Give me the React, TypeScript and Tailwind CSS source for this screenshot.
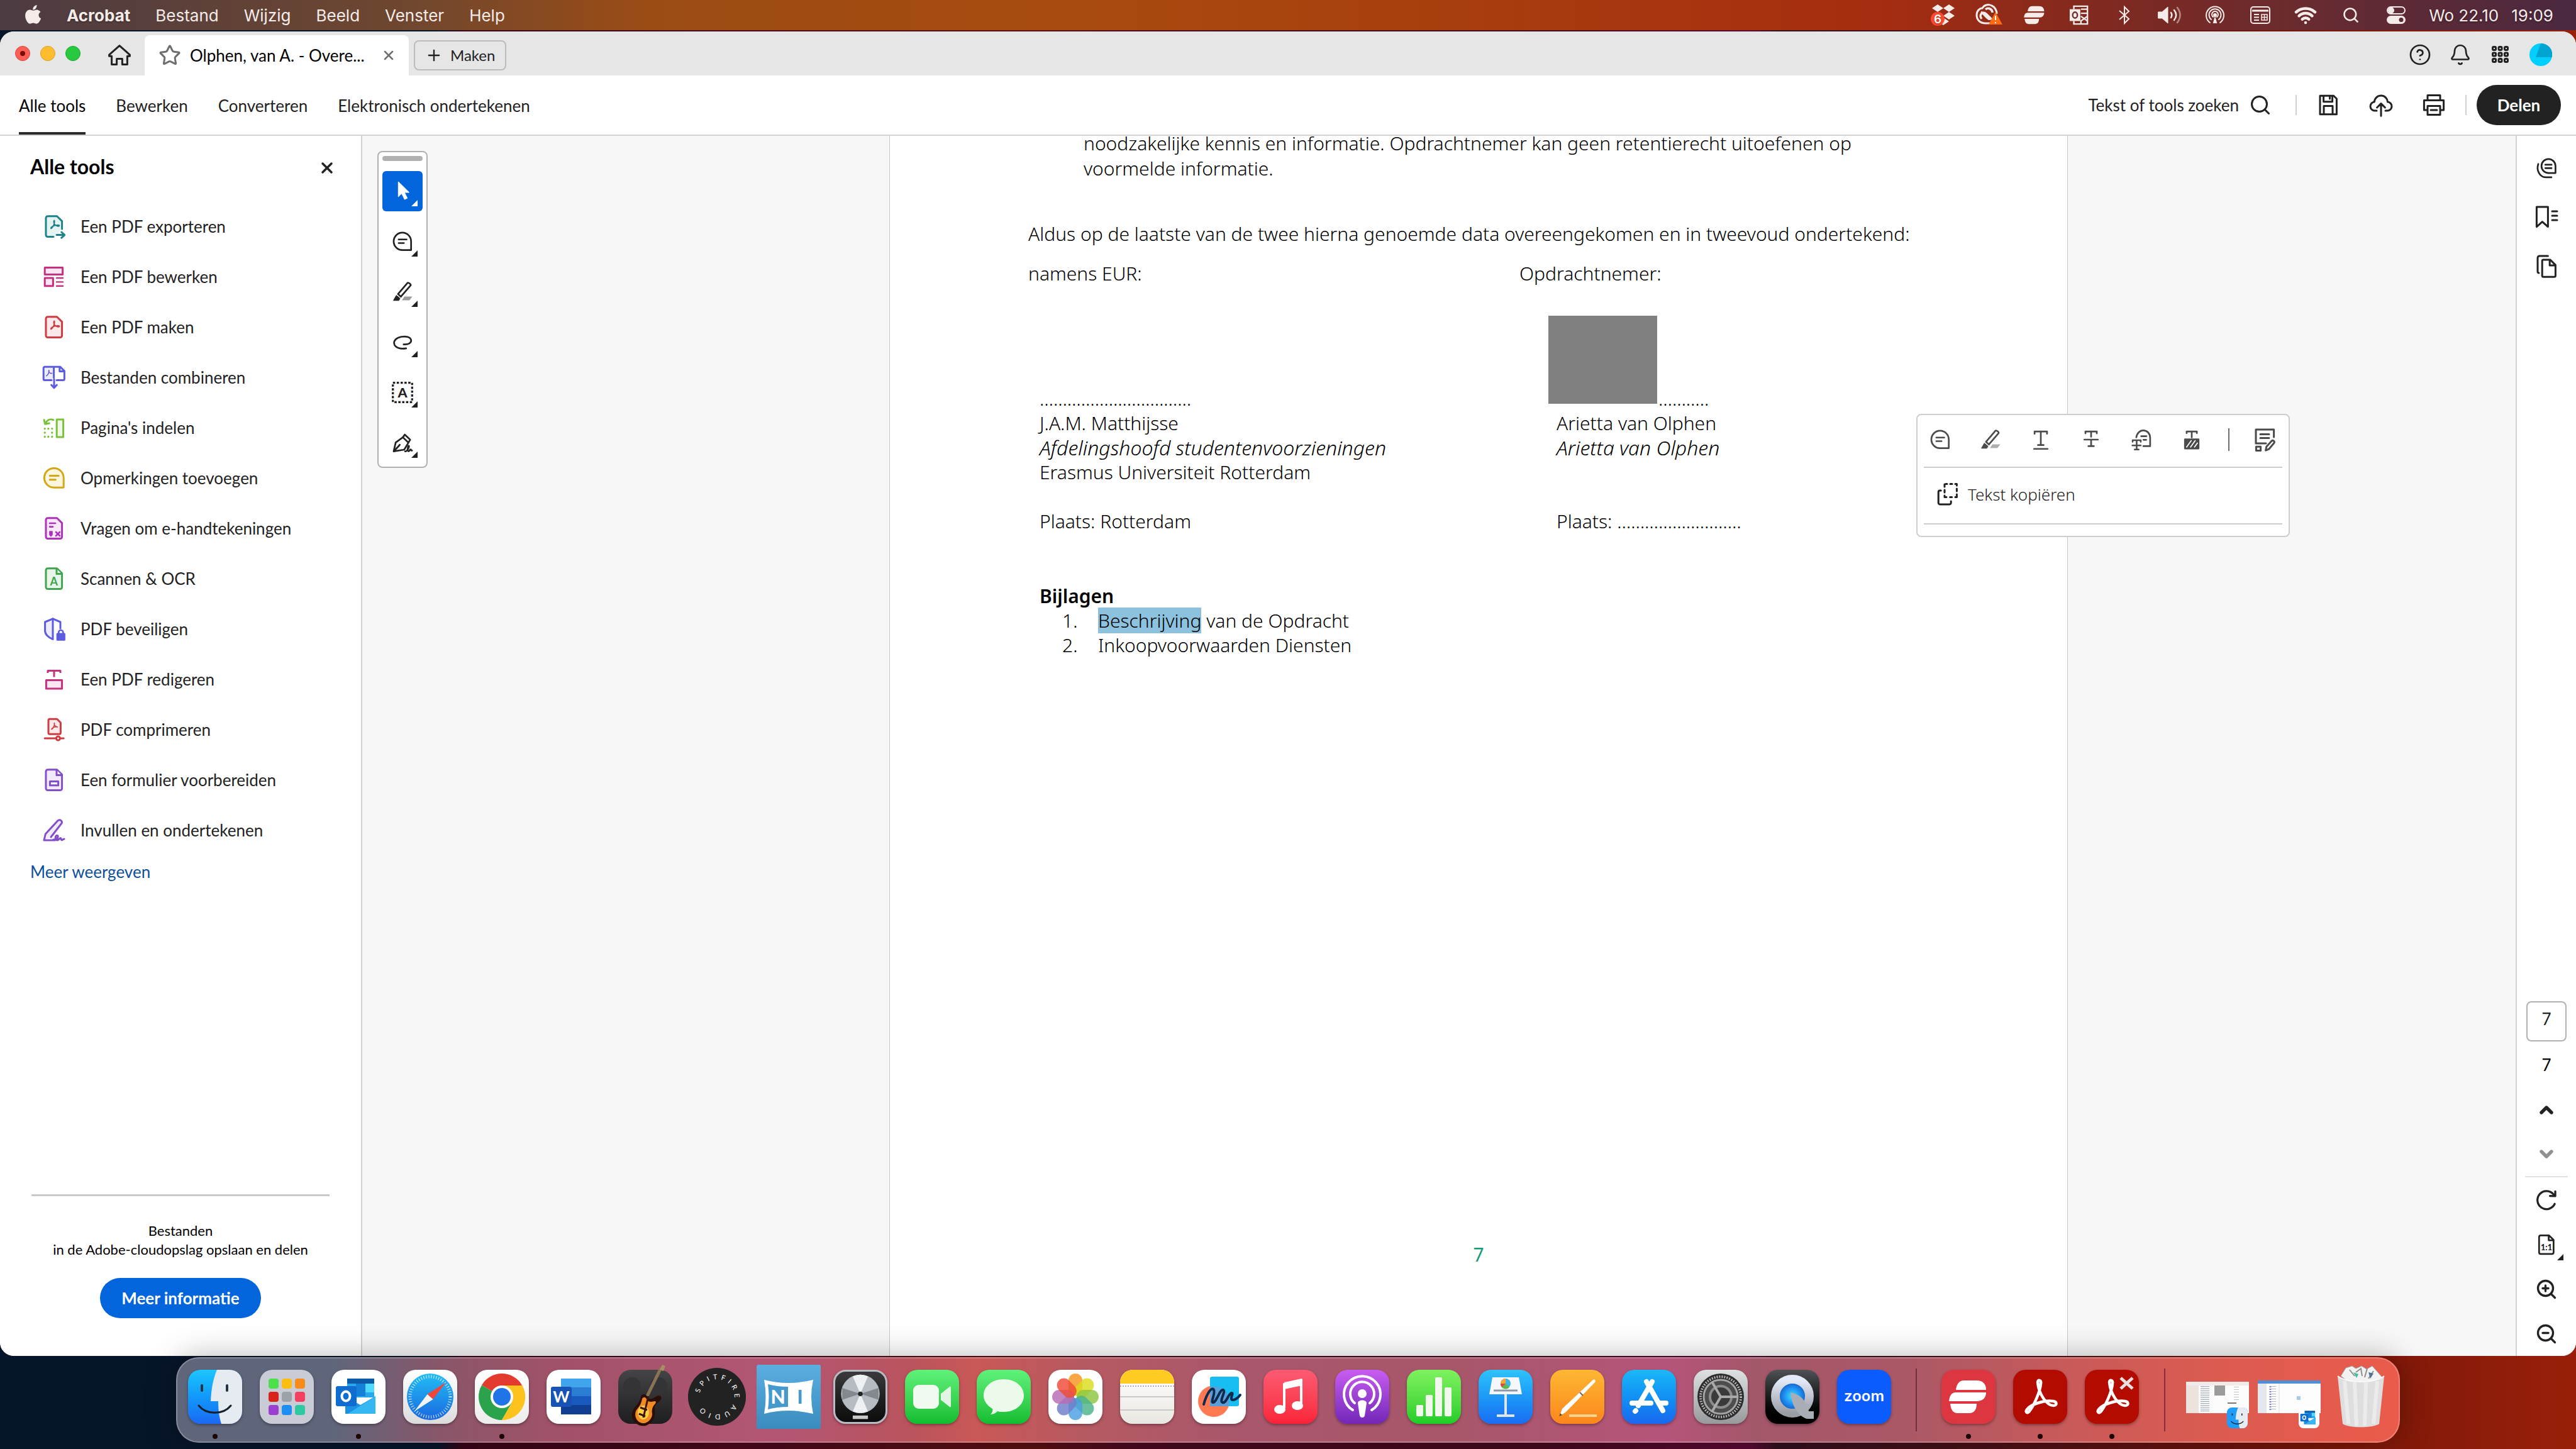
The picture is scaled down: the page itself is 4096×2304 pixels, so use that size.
import React from 'react';
import { Bell, ChevronDown, ChevronUp, CircleQuestionMark, Plus, Search, Star, Wifi, X, ZoomIn, ZoomOut } from 'lucide-react';

type Kids = { children?: React.ReactNode };

/* 20-unit line icon */
function Ico({ children, className = 'size-10' }: Kids & { className?: string }) {
  return (
    <svg viewBox="0 0 20 20" className={className} fill="none" stroke="currentColor" strokeWidth="1.5" strokeLinecap="round" strokeLinejoin="round" aria-hidden="true">
      {children}
    </svg>
  );
}

const DOC = 'M5 1.9h7.3L16.3 5.8v11a1.5 1.5 0 0 1-1.5 1.5H5a1.5 1.5 0 0 1-1.5-1.5V3.4A1.5 1.5 0 0 1 5 1.9z';
const LOOP = 'M10 5.2c-.9 1.4.2 3.2 1.3 4 1.1.9 2.6.8 2.9.3.2-.6-1.4-.8-3-.4-2 .5-3.7 1.5-3.8 2.4.2.8 1.6-.9 2.3-2.6.7-1.7.9-3.6.3-3.7z';

function CommentShape() {
  return (
    <>
      <path d="M17.4 17.6H10A7.7 7.7 0 1 1 17.6 10v7.4z" fill="var(--tint,none)" />
      <path d="M6.6 8.2h7M6.6 11.4h4.6" />
    </>
  );
}

const tools: { label: string; color: string; icon: React.ReactNode }[] = [
  {
    label: 'Een PDF exporteren',
    color: 'text-[#1d8389] [--tint:#e6f3f3]',
    icon: (
      <>
        <path d="M16.3 12V5.8L12.3 1.9H5a1.5 1.5 0 0 0-1.5 1.5v13.4A1.5 1.5 0 0 0 5 18.3h4.5" fill="var(--tint)" />
        <path d={LOOP} strokeWidth=".9" />
        <path d="M12 16.8h6M15.9 14.5l2.4 2.3-2.4 2.3" />
      </>
    ),
  },
  {
    label: 'Een PDF bewerken',
    color: 'text-[#c5307f] [--tint:#fce6f1]',
    icon: (
      <>
        <path d="M2.6 2.8h14.2v5.4H2.6zM2.6 11h6.6v6.4H2.6z" fill="var(--tint)" />
        <path d="M12 11h5M12 14.2h5M12 17.4h5" strokeWidth="1.2" />
      </>
    ),
  },
  { label: 'Een PDF maken', color: 'text-[#cf3b42] [--tint:#fde9ea]', icon: (<><path d={DOC} fill="var(--tint)" /><path d={LOOP} strokeWidth=".9" /></>) },
  {
    label: 'Bestanden combineren',
    color: 'text-[#5c5ce0] [--tint:#ececfc]',
    icon: (
      <>
        <path d="M8 12.2H2.6a1 1 0 0 1-1-1V2.6a1 1 0 0 1 1-1h7.2v8.6" fill="var(--tint)" />
        <path d="M9.8 1.6h5l3.4 3.3v6.3a1 1 0 0 1-1 1h-5.2M14.4 1.8v3.5h3.6" />
        <path d="M5.9 4.4c-.6 1 .4 2 1.4 2.4.6.2 1 0 1-.2M5.9 4.4c.6 1.400-.9 3.800-2 4.400" strokeWidth=".8" />
        <path d="M10 11.500v6.300M7.800 16l2.200 2.400 2.200-2.400" />
      </>
    ),
  },
  {
    label: "Pagina's indelen",
    color: 'text-[#7cc13e] [--tint:#f0f9e7]',
    icon: (
      <>
        <path d="M12.100 3.500h5.200v14h-5.200z" fill="var(--tint)" />
        <path d="M9.400 3.800C6.800 2.800 4.400 4 3.200 6.600M2 3.800l.8 3.300 3.400-.6" />
        <path d="M2.600 10.800h0M5.400 10.800h0M8.400 10.800h0M2.600 14h0M2.600 17.200h0M5.400 17.200h0M8.400 17.200h0M8.400 14h0" strokeWidth="1.7" />
      </>
    ),
  },
  { label: 'Opmerkingen toevoegen', color: 'text-[#d3a814] [--tint:#fdf6df]', icon: <CommentShape /> },
  {
    label: 'Vragen om e-handtekeningen',
    color: 'text-[#ac32b8] [--tint:#f8e8fa]',
    icon: (
      <>
        <path d={DOC} fill="var(--tint)" />
        <path d="M6.500 6h4.500M6.500 8.800h2.500M11.500 13l3 3M14.500 13l-3 3" strokeWidth="1.300" />
        <path d="M6.500 12.500h2v2.600l-1 1.200-1-1.200z" fill="currentColor" strokeWidth=".8" />
      </>
    ),
  },
  {
    label: 'Scannen & OCR',
    color: 'text-[#41a450] [--tint:#e8f6ea]',
    icon: (
      <>
        <path d={DOC} fill="var(--tint)" />
        <path d="M12 2.200v4h4" fill="#fff" />
        <text x="9.900" y="15.300" fontSize="9" textAnchor="middle" fill="currentColor" stroke="none" fontWeight="700">A</text>
      </>
    ),
  },
  {
    label: 'PDF beveiligen',
    color: 'text-[#5c5ce0] [--tint:#ececfc]',
    icon: (
      <>
        <path d="M9 1.900 2.800 4.500v7c0 2.800 2.600 5.400 6.200 6.700z" fill="var(--tint)" />
        <path d="M9 1.900l6 2.600v5" />
        <path d="M12.600 14h5.600v4.600h-5.600z" fill="currentColor" />
        <path d="M13.600 13.600v-.8a1.800 1.800 0 0 1 3.600 0v.8" strokeWidth="1.300" />
      </>
    ),
  },
  {
    label: 'Een PDF redigeren',
    color: 'text-[#c5307f] [--tint:#fce6f1]',
    icon: (
      <>
        <path d="M3.700 10.800h12.600v6.700H3.700z" fill="var(--tint)" />
        <path d="M5 5V3.300h10V5M10 3.500v4.800" strokeLinecap="butt" />
      </>
    ),
  },
  {
    label: 'PDF comprimeren',
    color: 'text-[#cf3b42] [--tint:#fde9ea]',
    icon: (
      <>
        <path d="M6.500 1.600h5.800l2.900 2.900v8.100a1 1 0 0 1-1 1H6.500a1 1 0 0 1-1-1V2.600a1 1 0 0 1 1-1z" fill="var(--tint)" />
        <path d="M10.200 4.800c-.6 1.500.6 2.700 2.600 3.200M10.200 4.800c.6 1.700-.8 4.200-2.300 5 1-1.500 3-2.100 4.900-1.800" strokeWidth=".8" />
        <path d="M2.600 17h15" />
        <circle cx="13.200" cy="17" r="1.500" fill="#fff" />
      </>
    ),
  },
  {
    label: 'Een formulier voorbereiden',
    color: 'text-[#834fc8] [--tint:#f1eafa]',
    icon: (
      <>
        <path d={DOC} fill="var(--tint)" />
        <path d="M12 2.200v4h4" fill="#fff" />
        <path d="M6.700 11.200h6.600v3.200H6.700z" fill="#fff" />
      </>
    ),
  },
  {
    label: 'Invullen en ondertekenen',
    color: 'text-[#834fc8] [--tint:#f1eafa]',
    icon: (
      <>
        <path d="M2 18l1.200-5 9.800-10.600c1.600-1.400 4 .4 2.900 2.300L7.500 15.500M2 18h8.600" fill="var(--tint)" />
        <path d="M9.500 17.500c2.800.5 4.600-3 3-3.200-1.800 0-2 3.800 0 3.700 1.500-.2 2-1.800 2.600-1.800.7 0 .2 1.700 1 1.700.6 0 1-.7 1.900-.9" />
      </>
    ),
  },
];

function Highlighter() {
  return (
    <>
      <path d="M9.500 17.500l2.200-3.400h7l-2.600 3.400z" fill="currentColor" opacity=".45" stroke="none" />
      <path d="M6 12l8.400-9.800c.7-.8 3.400 1.300 2.700 2.200L8.600 14.300zM6 12l2.600 2.300" />
      <path d="M4.600 13.400l3 2.500-1 1.600H2.200z" fill="currentColor" strokeWidth=".8" />
    </>
  );
}

const palette: { name: string; icon: React.ReactNode }[] = [
  { name: 'Selecteren', icon: <path d="M6.300 1.800v13l3-2.900 2.600 5.300 2.300-1.100-2.500-5h4z" fill="currentColor" strokeWidth=".6" /> },
  { name: 'Opmerking', icon: <CommentShape /> },
  { name: 'Markeren', icon: <Highlighter /> },
  { name: 'Tekenen', icon: <path d="M11 12c4.200.4 7-1.400 6.600-3.800C17 5.300 13 4.600 9 5.300c-4.500.8-7 3.400-6.300 6.400.8 3.200 5.500 4.700 10.500 3.800" /> },
  {
    name: 'Tekst selecteren',
    icon: (
      <>
        <path d="M1.500 1.500h17v17h-17z" strokeDasharray="2 1.400" strokeLinecap="butt" strokeWidth="1.800" />
        <text x="10" y="14.300" fontSize="12" textAnchor="middle" fill="currentColor" stroke="none" fontWeight="900">A</text>
      </>
    ),
  },
  {
    name: 'Ondertekenen',
    icon: (
      <>
        <path d="M2.200 17.600 4 9.800l6.300-4.600 4.900 4.700-3.700 6.200z" />
        <path d="M10.300 5.200 12 2.800l4.800 4.500-1.600 2.600M2.600 17.200l5-5.400" />
        <path d="M12.300 17.600c1.800.5 4.200-4.800 3.200-4.900-1 0-1.200 4.900-.2 4.900s1.100-1.700 1.800-1.700.3 1.300 1.300 1" />
      </>
    ),
  },
];

const contextTools: { name: string; icon: React.ReactNode }[] = [
  { name: 'Opmerking', icon: <CommentShape /> },
  { name: 'Markeren', icon: <Highlighter /> },
  { name: 'Onderstrepen', icon: <path d="M4.500 4.800V2.800h11v2M10 3v11.500M7.500 14.800h5M4 18.200h12" /> },
  { name: 'Doorhalen', icon: <path d="M5 4.500V2.800h10v1.700M10 3v4.500M10 10v5.500M7.600 15.800h4.800M4 10h12" /> },
  {
    name: 'Tekst vervangen',
    icon: (
      <>
        <path d="M5.500 8C6 4.300 8.600 1.900 11.600 1.900c3.500 0 6.100 2.700 6.100 6.500v7.400h-6M9.800 7h4.600M11.800 10.200h2.400" />
        <path d="M2.200 12V10.500h7.200V12M5.800 10.700v8M4 18.800h3.600M2 15.200h7.400" strokeWidth="1.400" />
      </>
    ),
  },
  {
    name: 'Redigeren',
    icon: (
      <>
        <path d="M5.500 4.300V2.800h9v1.500M10 3v5" />
        <path d="M4 9.800h12v8H4z" fill="currentColor" />
        <path d="M5.500 16.500l4-5.500M9 16.500l4-5.500M12.500 16.500l2.500-3.500" stroke="#fff" strokeWidth="1" />
      </>
    ),
  },
];

/* ---------- Menu bar ---------- */

const menus = ['Bestand', 'Wijzig', 'Beeld', 'Venster', 'Help'];

function Ribbon() {
  return (
    <>
      <path d="M36 17h20c10 0 15 6 15 15H23c1-9 5-15 13-15z" />
      <path d="M12 50c1-9 4-14 11-14h48c0 9-6 14-15 14z" />
      <path d="M14 54h42c0 9-4 15-12 15H26c-8 0-11-6-12-15z" />
    </>
  );
}

function StatusCell({ children }: Kids) {
  return <div className="flex w-[72px] justify-center">{children}</div>;
}

function MenuBar() {
  return (
    <header className="flex h-12 items-center bg-[linear-gradient(90deg,#4c3b42_0%,#70472f_16%,#9b4c15_25%,#a84b0f_42%,#a83c0e_58%,#a52d10_73%,#82291f_81%,#6a2b2f_89%,#4a2940_100%)] pr-9 pl-10 font-['Inter'] text-[26px] text-[#f5ecea] [text-shadow:0_1px_3px_rgb(0_0_0/0.4)]">
      <nav className="flex items-center gap-10">
        <svg viewBox="0 0 26 32" className="h-8 w-[26px]" fill="currentColor" aria-label="Apple">
          <path d="M18.500 0c.2 2.100-.6 4-1.800 5.400-1.100 1.400-2.800 2.200-4.400 2.100-.2-2 .7-4 1.800-5.200C15.300 1 17.100.1 18.500 0zM24.500 11c-2 1.200-3 2.900-3 5 0 2.500 1.400 4.400 3.700 5.300-.5 1.600-1.200 3-2.200 4.500-1.300 2-2.700 3.900-4.900 4-2.100 0-2.800-1.300-5.200-1.300s-3.100 1.200-5.200 1.300c-2.100.1-3.700-2.100-5-4.100C0 21.700-1 14.600 1.700 10.900 3.200 8.700 5.400 7.500 7.600 7.500c2.200 0 3.600 1.300 5.400 1.300s2.900-1.300 5.500-1.300c2 0 4.500 1.300 6 3.500z" />
        </svg>
        <span className="font-bold">Acrobat</span>
        {menus.map((m) => (
          <button key={m} type="button">{m}</button>
        ))}
      </nav>
      <div className="ml-auto flex items-center">
        <StatusCell>
          <svg viewBox="0 0 40 36" className="h-9 w-10" fill="currentColor">
            <path d="M11 1l9 6-9 6-9-6zM29 1l9 6-9 6-9-6zM29 13l9 6-9 6-9-6zM20 22l9 6-9 6-6-4z" />
            <circle cx="11" cy="24" r="11" fill="#ff4a31" />
            <text x="11" y="31" fontSize="19" fontWeight="600" textAnchor="middle" fill="#fff">6</text>
          </svg>
        </StatusCell>
        <StatusCell>
          <svg viewBox="0 0 44 36" className="h-9 w-11" fill="none" stroke="currentColor" strokeWidth="3">
            <path d="M26 31h-9C8 31 3 25 3 18 3 11 8 7 12 7c3-5 9-7 15-4 5 2 8 8 8 13" />
            <path d="M27 23c-6 5-10-6-17-10M11 24c-5-6 1-13 7-8l8 8M17 9c5-4 11 0 11 5" strokeWidth="3.500" />
            <path d="M33 13l11 20H22z" fill="#ff6a13" stroke="none" />
            <path d="M33 19v7M33 29v2" stroke="#fff" strokeWidth="2" />
          </svg>
        </StatusCell>
        <StatusCell><svg viewBox="8 14 66 58" className="h-8 w-9" fill="currentColor"><Ribbon /></svg></StatusCell>
        <StatusCell>
          <svg viewBox="0 0 34 34" className="size-8" fill="none" stroke="currentColor" strokeWidth="2.500">
            <path d="M8 7V2h23v30H8v-5M20 7h10M20 14h10M20 19l11 8M31 19L20 27v5" />
            <rect x="1" y="7" width="18" height="20" fill="currentColor" stroke="none" />
            <ellipse cx="10" cy="17" rx="4" ry="5" stroke="#6d2c2e" />
          </svg>
        </StatusCell>
        <StatusCell><svg viewBox="0 0 20 32" className="h-8 w-5" fill="none" stroke="currentColor" strokeWidth="2"><path d="M2 9l15 13-7 7V3l7 7L2 23" /></svg></StatusCell>
        <StatusCell>
          <svg viewBox="0 0 40 30" className="h-[30px] w-10" fill="none" stroke="currentColor" strokeWidth="2.500" strokeLinecap="round">
            <path d="M2 10h6l9-8v26l-9-8H2z" fill="currentColor" strokeLinejoin="round" strokeWidth="1" />
            <path d="M22 11c2 3 2 5 0 8M27 7c4 5 4 11 0 16" />
            <path d="M32 3c6 8 6 16 0 24" opacity=".5" />
          </svg>
        </StatusCell>
        <StatusCell>
          <svg viewBox="0 0 32 32" className="size-8" fill="none" stroke="currentColor" strokeWidth="2" strokeLinecap="round">
            <path d="M8 28a14 14 0 1 1 16 0M10 23a9.500 9.500 0 1 1 12 0M13 19a5 5 0 1 1 6 0" />
            <circle cx="16" cy="16" r="2" fill="currentColor" />
            <path d="M16 21l-2 7h4z" fill="currentColor" />
          </svg>
        </StatusCell>
        <StatusCell>
          <svg viewBox="0 0 32 28" className="h-7 w-8" fill="none" stroke="currentColor" strokeWidth="2">
            <rect x="1" y="1" width="30" height="26" rx="4" />
            <path d="M3 7h26" strokeWidth="3" />
            <path d="M6 13h8M6 17.500h8M6 22h8" />
            <path d="M18 13h9v9h-9zM18 17.500h9M22.500 13v9" strokeWidth="1.500" />
          </svg>
        </StatusCell>
        <StatusCell><Wifi className="size-9" strokeWidth={3} /></StatusCell>
        <StatusCell><Search className="size-7" strokeWidth={2.2} /></StatusCell>
        <StatusCell>
          <svg viewBox="0 0 30 28" className="h-7 w-[30px]" fill="none" stroke="currentColor" strokeWidth="2">
            <rect x="1" y="1" width="28" height="11" rx="5.500" />
            <circle cx="7" cy="6.500" r="4" fill="currentColor" />
            <rect x="1" y="16" width="28" height="11" rx="5.500" fill="currentColor" />
            <circle cx="23" cy="21.500" r="3.500" fill="#5c2b36" stroke="none" />
          </svg>
        </StatusCell>
        <div className="ml-4 flex gap-5 whitespace-nowrap"><span>Wo 22.10</span><span>19:09</span></div>
      </div>
    </header>
  );
}

/* ---------- Window chrome ---------- */

function TabBar() {
  return (
    <div className="flex h-[70px] items-end bg-[#e6e6e6] pr-[38px]">
      <div className="flex h-[70px] items-center gap-4 pl-6">
        <span className="flex size-6 items-center justify-center rounded-full border border-[#e0443e] bg-[#fe5f57]"><span className="size-2 rounded-full bg-[#7a0c06]" /></span>
        <span className="size-6 rounded-full border border-[#dea123] bg-[#febc2e]" />
        <span className="size-6 rounded-full border border-[#1aab29] bg-[#28c840]" />
      </div>
      <button type="button" aria-label="Start" className="mb-3 ml-[42px] text-[#222]">
        <Ico className="size-10"><path d="M1.800 9.600 10 2.300l8.200 7.300v1h-2v6.700h-4v-4.500H7.800v4.500h-4v-6.700h-2z" /></Ico>
      </button>
      <div className="ml-5 flex h-16 w-[420px] items-center rounded-t-lg bg-white pr-5 pl-[22px] text-[26px] text-black">
        <Star className="size-9 text-[#6e6e6e]" strokeWidth={2} />
        <span className="ml-3.5 flex-1 whitespace-nowrap">Olphen, van A. - Overe...</span>
        <button type="button" aria-label="Sluiten" className="text-[#6e6e6e]"><X className="size-6" strokeWidth={2.5} /></button>
      </div>
      <button type="button" className="mb-2 ml-2 flex h-12 items-center gap-3 rounded-lg border-2 border-[#bcbcbc] px-4 text-2xl text-[#222]">
        <Plus className="size-7" strokeWidth={2} />
        <span>Maken</span>
      </button>
      <div className="ml-auto flex h-[70px] items-center gap-7 pt-1 text-[#222]">
        <button type="button" aria-label="Help"><CircleQuestionMark className="size-9" strokeWidth={1.8} /></button>
        <button type="button" aria-label="Meldingen"><Bell className="size-9" strokeWidth={1.8} /></button>
        <button type="button" aria-label="Apps">
          <svg viewBox="0 0 28 28" className="mx-1 size-7" fill="none" stroke="currentColor" strokeWidth="3">
            {[1.500, 11, 20.500].map((y) => [1.500, 11, 20.500].map((x) => <rect key={`${x}-${y}`} x={x} y={y} width="5" height="5" rx="1.500" />))}
          </svg>
        </button>
        <button type="button" aria-label="Profiel">
          <svg viewBox="0 0 36 36" className="size-9"><circle cx="18" cy="18" r="18" fill="#00cfff" /><path d="M18 0a18 18 0 0 1 18 22H10z" fill="#00a4d0" /></svg>
        </button>
      </div>
    </div>
  );
}

function ToolBar() {
  return (
    <div className="flex h-24 items-center border-b-2 border-[#d3d3d3] pr-6 pl-[30px] text-[26px] text-[#222]">
      <nav className="flex h-full gap-12">
        <button type="button" className="h-full border-b-4 border-[#2c2c2c] pt-1.5 text-black">Alle tools</button>
        <button type="button" className="pt-0.5">Bewerken</button>
        <button type="button" className="pt-0.5">Converteren</button>
        <button type="button" className="pt-0.5">Elektronisch ondertekenen</button>
      </nav>
      <div className="ml-auto flex items-center">
        <button type="button" className="flex items-center gap-4"><span>Tekst of tools zoeken</span><Search className="size-9" strokeWidth={2} /></button>
        <span className="ml-[38px] h-8 w-0.5 bg-[#d0d0d0]" />
        <button type="button" aria-label="Opslaan" className="ml-[30px]">
          <Ico><path d="M3.500 2.600h10.800l2.400 2.400v12.400H3.500zM6.300 2.600v4.800h7V2.600M6.500 17.400v-6.600h7v6.600M11.300 3v2" /></Ico>
        </button>
        <button type="button" aria-label="Uploaden" className="ml-11">
          <Ico><path d="M6.500 14.500H5.300a3.500 3.500 0 0 1-.6-7c.2-2.900 2.500-5 5.300-5s5 2.100 5.300 5a3.500 3.500 0 0 1-.6 7h-1.200M10 18.600V9M6.800 12 10 8.800l3.200 3.200" /></Ico>
        </button>
        <button type="button" aria-label="Afdrukken" className="ml-11">
          <Ico><path d="M5 6V2.300h10V6M5 14H2.200V6.300h15.600V14H15M5 10.800h10v7H5zM7.500 14h5" /></Ico>
        </button>
        <span className="ml-[30px] h-8 w-0.5 bg-[#d0d0d0]" />
        <button type="button" className="ml-4 h-16 w-[134px] rounded-full bg-[#222] font-bold text-white">Delen</button>
      </div>
    </div>
  );
}

function SidePanel() {
  return (
    <aside className="flex w-[576px] shrink-0 flex-col border-r-2 border-[#d3d3d3] bg-white">
      <div className="flex h-[104px] items-center justify-between pr-10 pb-1.5 pl-12">
        <h2 className="text-[32px] font-bold text-black">Alle tools</h2>
        <button type="button" aria-label="Paneel sluiten" className="pt-1 text-[#222]"><X className="size-7" strokeWidth={3} /></button>
      </div>
      <ul>
        {tools.map((t) => (
          <li key={t.label}>
            <button type="button" className="flex h-20 w-full items-center gap-[22px] pl-[66px] text-[26px] text-[#222]">
              <span className={t.color}><Ico>{t.icon}</Ico></span>
              <span>{t.label}</span>
            </button>
          </li>
        ))}
      </ul>
      <a href="#meer" className="mt-1.5 ml-12 text-[26px] leading-10 text-[#0d4f9c]">Meer weergeven</a>
      <div className="mx-[50px] mt-auto flex flex-col items-center border-t-3 border-[#c8c8c8] pt-10 pb-[60px] text-center">
        <p className="text-[22px] leading-[30px] whitespace-nowrap text-black">Bestanden<br />in de Adobe-cloudopslag opslaan en delen</p>
        <button type="button" className="mt-[30px] h-16 w-64 rounded-full bg-[#0265dc] text-[26px] font-bold text-white">Meer informatie</button>
      </div>
    </aside>
  );
}

function Corner() {
  return <svg viewBox="0 0 10 10" className="absolute right-2 bottom-2 size-[10px]" fill="currentColor"><path d="M10 0v10H0z" /></svg>;
}

function Palette() {
  return (
    <div className="w-[126px] shrink-0 pt-6 pl-6">
      <div className="flex w-20 flex-col items-center gap-4 rounded-lg border-2 border-[#b1b1b1] bg-white pt-1.5 pb-1.5">
        <span className="h-2 w-16 rounded-full bg-[#b1b1b1]" />
        {palette.map((p, i) => (
          <button key={p.name} type="button" aria-label={p.name} className={i === 0 ? 'relative flex size-16 items-center justify-center rounded-md bg-[#0265dc] text-white' : 'relative flex size-16 items-center justify-center text-[#222]'}>
            <Ico className="size-9">{p.icon}</Ico>
            <Corner />
          </button>
        ))}
      </div>
    </div>
  );
}

function ContextMenu() {
  return (
    <div className="absolute top-[442px] left-[1632px] flex h-[196px] w-[594px] flex-col rounded-lg border-2 border-[#cdcdcd] bg-white px-2.5">
      <div className="flex h-[84px] items-center border-b-2 border-[#cdcdcd] pb-1 pl-2 text-[#4b4b4b]">
        <div className="flex gap-11">
          {contextTools.map((t) => <button key={t.name} type="button" aria-label={t.name}><Ico className="size-9">{t.icon}</Ico></button>)}
        </div>
        <span className="ml-10 h-9 w-0.5 bg-[#6e6e6e]" />
        <button type="button" aria-label="Bewerken" className="ml-9">
          <Ico className="size-10">
            <path d="M17.300 8V2H3v11h8M6.500 5.700h7M6.500 8.800h7M3.200 15.600h3.600v3.200H3.200z" />
            <path d="M10.800 18.600l.6-3 4.200-4.600c1-.8 2.600.4 1.900 1.600l-4.200 5z" />
          </Ico>
        </button>
      </div>
      <button type="button" className="flex h-[90px] items-center gap-3 border-b-2 border-[#cdcdcd] pb-1 pl-[18px] text-[26px] text-[#222]">
        <Ico className="size-10">
          <path d="M7.500 2v0M8.500 1.800h1M12 1.800h1.500M16 1.800h1.200v1.200M17.200 5.500v2M17.200 10v2.200H16M13.300 12.200h-1.500M9 12.200H7.500V11M7.500 8.500v-2M7.500 4V2" />
          <path d="M4.600 7H3.800A1.200 1.200 0 0 0 2.600 8.200v8.600A1.200 1.200 0 0 0 3.800 18h7.600a1.200 1.200 0 0 0 1.200-1.200V15.500" />
        </Ico>
        <span>Tekst kopiëren</span>
      </button>
    </div>
  );
}

function Page() {
  return (
    <article className="relative flex w-[1874px] flex-col border-x border-[#c8c8c8] bg-white pl-[220px] font-['Noto_Sans'] text-[30px] leading-[39px] font-light text-black">
      <p className="pl-[88px] leading-6 whitespace-nowrap">noodzakelijke kennis en informatie. Opdrachtnemer kan geen retentierecht uitoefenen op</p>
      <p className="mt-2 pl-[88px]">voormelde informatie.</p>
      <p className="mt-[65px] whitespace-nowrap">Aldus op de laatste van de twee hierna genoemde data overeengekomen en in tweevoud ondertekend:</p>
      <div className="mt-6 grid grid-cols-[781px_1fr]">
        <section>
          <p>namens EUR:</p>
          <div className="flex h-[199px] items-end pl-[18px]"><p>……………………………</p></div>
          <div className="pl-[18px]">
            <p>J.A.M. Matthijsse</p>
            <p className="text-[32px] italic">Afdelingshoofd studentenvoorzieningen</p>
            <p>Erasmus Universiteit Rotterdam</p>
            <p className="mt-[39px]">Plaats: Rotterdam</p>
          </div>
        </section>
        <section>
          <p>Opdrachtnemer:</p>
          <div className="flex h-[199px] items-end gap-0.5 pl-[46px]"><div className="mb-[11px] h-[140px] w-[173px] bg-[#808080]" /><p>………..</p></div>
          <div className="pl-[59px]">
            <p>Arietta van Olphen</p>
            <p className="text-[32px] italic">Arietta van Olphen</p>
            <p className="mt-[78px]">Plaats: ………………………</p>
          </div>
        </section>
      </div>
      <section className="mt-20 pl-[18px]">
        <h3 className="font-semibold">Bijlagen</h3>
        <ol>
          <li className="flex"><span className="w-[93px] pl-9">1.</span><span><mark className="bg-[#8dc2df] text-black">Beschrijving</mark> van de Opdracht</span></li>
          <li className="flex"><span className="w-[93px] pl-9">2.</span><span>Inkoopvoorwaarden Diensten</span></li>
        </ol>
      </section>
      <p className="mt-auto -ml-[220px] pb-[142px] text-center text-[30px] font-normal text-[#109b74]">7</p>
      <ContextMenu />
    </article>
  );
}

function RightRail() {
  const cell = 'relative flex h-[71px] w-full items-center justify-center';
  return (
    <aside className="flex w-24 shrink-0 flex-col items-center border-l-2 border-[#d3d3d3] bg-white pt-3 text-[#222]">
      <button type="button" aria-label="Opmerkingen" className="flex h-[78px] items-center"><Ico className="size-9">
        <path d="M18 14.500h-6a6.200 6.200 0 1 1 6-6zM9 7.200h5.500M9 10.200h5.500" />
        <path d="M2.800 6.500c-2 5.500 1.200 11.500 6.600 11.800h5" />
      </Ico></button>
      <button type="button" aria-label="Bladwijzers" className="flex h-[78px] items-center"><Ico>
        <path d="M2.200 2h9v15.800l-4.500-4-4.500 4zM14.500 5.500h4M14.500 9h4M14.500 12.500h4" />
      </Ico></button>
      <button type="button" aria-label="Pagina's" className="flex h-[78px] items-center"><Ico>
        <path d="M7.600 5h5.400l4.200 4.200v8.400a1 1 0 0 1-1 1H7.600a1 1 0 0 1-1-1V6a1 1 0 0 1 1-1zM12.600 5.200v4.300H17" />
        <path d="M4 15.500c-.7 0-1-.5-1-1.200V3.600c0-1 .6-1.600 1.600-1.600h6.600" />
      </Ico></button>
      <input aria-label="Paginanummer" defaultValue="7" className="mt-auto h-16 w-16 rounded-lg border-2 border-[#b1b1b1] pb-2 text-center text-[26px]" />
      <span className="flex h-[74px] items-center text-[26px] text-black">7</span>
      <button type="button" aria-label="Vorige pagina" className="flex h-[70px] items-center"><ChevronUp className="size-8" strokeWidth={4} /></button>
      <button type="button" aria-label="Volgende pagina" className="flex h-[70px] items-center text-[#909090]"><ChevronDown className="size-8" strokeWidth={4} /></button>
      <span className="h-0.5 w-[68px] bg-[#e1e1e1]" />
      <button type="button" aria-label="Draaien" className={cell}>
        <Ico className="size-9"><path d="M17.300 13.500A8 8 0 1 1 16.200 5M17.800 2.400v4.200l-4.700-.2" strokeWidth="1.800" /></Ico>
      </button>
      <button type="button" aria-label="Ware grootte" className={cell}>
        <Ico className="size-9">
          <path d={DOC} />
          <path d="M12 2.200v4h4" />
          <text x="10" y="14.800" fontSize="7" textAnchor="middle" fill="currentColor" stroke="none" fontWeight="900">1:1</text>
        </Ico>
        <svg viewBox="0 0 10 10" className="absolute right-5 bottom-2.5 size-[10px]" fill="currentColor"><path d="M10 0v10H0z" /></svg>
      </button>
      <button type="button" aria-label="Inzoomen" className={cell}><ZoomIn className="size-9" strokeWidth={2.2} /></button>
      <button type="button" aria-label="Uitzoomen" className={cell}><ZoomOut className="size-9" strokeWidth={2.2} /></button>
    </aside>
  );
}

/* ---------- Dock ---------- */

function Tile({ bg, children }: Kids & { bg: string }) {
  return (
    <div className={`size-[86px] overflow-hidden rounded-[20px] shadow-[0_2px_4px_rgb(0_0_0/0.35)] ${bg}`}>
      <svg viewBox="0 0 86 86" className="size-full" aria-hidden="true">{children}</svg>
    </div>
  );
}

function FinderArt() {
  return (
    <>
      <path d="M46 0h40v86H53c-3-9-5-20-5-36H36c1-20 4-36 10-50z" fill="#e6eaf1" />
      <path d="M22 25v8M62 25v8" stroke="#26323d" strokeWidth="4" strokeLinecap="round" />
      <path d="M17 57c12 15 39 15 51 0" fill="none" stroke="#15202b" strokeWidth="3" strokeLinecap="round" />
    </>
  );
}

function OutlookArt() {
  return (
    <>
      <path d="M25 14h43v30H25z" fill="#28a8ea" />
      <path d="M25 14h43v8H25z" fill="#0a5aa8" />
      <path d="M39 22h15v20H39z" fill="#1480d8" /><path d="M54 22h14v14H54z" fill="#50d9ff" />
      <path d="M22 42l24 14 24-14v28H22z" fill="#1e90e0" />
      <path d="M70 42v28H26z" fill="#35b8f1" />
      <rect x="7" y="26" width="33" height="32" rx="3" fill="#0f6cd0" />
      <ellipse cx="23" cy="42" rx="6.500" ry="7.500" fill="none" stroke="#fff" strokeWidth="4" />
    </>
  );
}

const LOOP_BIG = 'M39 20c0-5 6-4 5 2-1 12-10 34-19 45-3 3-6 0-3-4 6-8 27-15 42-13 6 1 6 7 0 7-10 0-23-17-25-37z';

const petals = ['#f7941d', '#d9dd1a', '#8cc63f', '#4bb28a', '#4a9fe0', '#6f7cc8', '#b76bb5', '#ef4b36'];
const launch = ['#4ce04a', '#fdbe12', '#f98b1a', '#d9241c', '#9ba3a8', '#f5405f', '#9a3fd0', '#1c8ef5', '#2fc9a0'];

const running = new Set(['Finder', 'Outlook', 'Chrome', 'Expresso', 'Acrobat', 'Acrobat Distiller']);

const apps: { name: string; art: React.ReactNode }[] = [
  { name: 'Finder', art: <Tile bg="bg-linear-to-b from-[#1fc6ff] to-[#1c68f3]"><FinderArt /></Tile> },
  {
    name: 'Launchpad',
    art: (
      <Tile bg="bg-[#c9ccd4]">
        {launch.map((c, i) => <rect key={c} x={14 + (i % 3) * 21} y={14 + Math.floor(i / 3) * 21} width="16" height="16" rx="4" fill={c} />)}
      </Tile>
    ),
  },
  { name: 'Outlook', art: <Tile bg="bg-white"><OutlookArt /></Tile> },
  {
    name: 'Safari',
    art: (
      <Tile bg="bg-linear-to-b from-white to-[#dcdcdc]">
        <defs><linearGradient id="saf" x2="0" y2="1"><stop stopColor="#22bdf5" /><stop offset="1" stopColor="#1a68e0" /></linearGradient></defs>
        <circle cx="43" cy="43" r="37" fill="url(#saf)" />
        <circle cx="43" cy="43" r="32" fill="none" stroke="#fff" strokeWidth="5" strokeDasharray="1 3" opacity=".85" />
        <path d="M68 20 38.500 39l9 8z" fill="#f0453a" /><path d="M18 66l20.500-27 9 8z" fill="#f4f4f4" />
      </Tile>
    ),
  },
  {
    name: 'Chrome',
    art: (
      <Tile bg="bg-linear-to-b from-white to-[#ececec]">
        <path d="M43 43 11 24.500a37 37 0 0 1 64 0z" fill="#e33b2e" />
        <path d="M43 43 11 24.500A37 37 0 0 0 43 80l16-28z" fill="#2ba24c" />
        <path d="M43 25h32.500A37 37 0 0 1 43 80l16-28z" fill="#fcc31e" />
        <circle cx="43" cy="43" r="18" fill="#fff" /><circle cx="43" cy="43" r="14" fill="#1f74e8" />
      </Tile>
    ),
  },
  {
    name: 'Word',
    art: (
      <Tile bg="bg-white">
        <path d="M23 14h48v15H23z" fill="#41a5ee" /><path d="M23 28h48v14H23z" fill="#2b7cd3" /><path d="M23 42h48v14H23z" fill="#185abd" /><path d="M23 56h48v15H23z" fill="#103f91" />
        <rect x="7" y="27" width="33" height="32" rx="3" fill="#1653b5" />
        <text x="23.500" y="52" fontSize="25" fontWeight="700" textAnchor="middle" fill="#fff">W</text>
      </Tile>
    ),
  },
  {
    name: 'GarageBand',
    art: (
      <div className="relative size-[86px] rounded-[20px] bg-linear-to-b from-[#454548] to-[#1e1e20]">
        <svg viewBox="0 -10 86 100" className="absolute -top-[10px] left-0 h-[100px] w-[86px]" aria-hidden="true">
          <circle cx="22" cy="26" r="14" fill="#343437" /><circle cx="64" cy="26" r="14" fill="#343437" />
          <path d="M46 42 68-3" stroke="#8a7355" strokeWidth="5" />
          <path d="M66 0 70-8l5 2-3 8z" fill="#a98e64" />
          <path d="M36 42c4-5 8-3 11 2s10 1 14-2c5-2 9 0 7 5-2 4-8 6-10 11-1 6 2 11-1 18-4 11-15 16-24 12s-14-14-10-23c3-7 11-10 13-23z" fill="#2a0d05" />
          <path d="M38 46c3-4 6-2 8 2s8 3 12 2c3 0 2 3 0 5-4 4-5 10-4 15s-6 16-15 15-14-11-11-19c3-6 8-8 10-20z" fill="#ef8a25" />
          <ellipse cx="40" cy="68" rx="9" ry="11" fill="#ffcf4a" />
          <path d="M35 60l11 4M33 70l10 4M48 42 40 76" stroke="#3b1507" strokeWidth="3" />
        </svg>
      </div>
    ),
  },
  {
    name: 'Spitfire',
    art: (
      <svg viewBox="0 0 92 92" className="-mt-[3px] size-[92px]" aria-hidden="true">
        <defs><path id="ring" d="M18 46a28 28 0 1 1 56 0 28 28 0 1 1-56 0" /></defs>
        <circle cx="46" cy="46" r="46" fill="#222" />
        <text fontSize="11" fill="#fff"><textPath href="#ring" startOffset="6">S &#160;P &#160;I &#160;T &#160;F &#160;I &#160;R &#160;E &#160; &#160;A &#160;U &#160;D &#160;I &#160;O</textPath></text>
      </svg>
    ),
  },
  {
    name: 'Native Instruments',
    art: (
      <svg viewBox="0 0 102 102" className="-mt-2 size-[102px]" aria-hidden="true">
        <defs><linearGradient id="ni" x2="0" y2="1"><stop stopColor="#5aaee0" /><stop offset="1" stopColor="#3a8cbf" /></linearGradient></defs>
        <rect width="102" height="102" rx="3" fill="url(#ni)" />
        <path d="M12 24q38 10 78 0-6 27 0 54-40-10-78 0 5-27 0-54z" fill="#fff" />
        <path d="M18 31q15 4 32 4v32q-17 0-32 4 3-20 0-40z" fill="#4499cd" />
        <text x="34" y="62" fontSize="30" fontWeight="900" textAnchor="middle" fill="#fff">N</text>
        <text x="69" y="62" fontSize="30" fontWeight="900" textAnchor="middle" fill="#4499cd">I</text>
      </svg>
    ),
  },
  {
    name: 'Logic Pro',
    art: (
      <Tile bg="border-3 border-[#b9bcc4] bg-linear-to-b from-[#3a3a3c] to-[#0c0c0c]">
        <circle cx="43" cy="38" r="33" fill="#b7bcc2" />
        <path d="M43 38 30 8a33 33 0 0 1 26 0zM43 38 30 68a33 33 0 0 0 26 0z" fill="#eef1f4" />
        <path d="M43 38 12 28v20zM43 38l31-10v20z" fill="#84898f" />
        <circle cx="43" cy="38" r="4" fill="#222" /><rect x="30" y="75" width="26" height="6" fill="#c9c9cc" />
      </Tile>
    ),
  },
  {
    name: 'FaceTime',
    art: <Tile bg="bg-linear-to-b from-[#5ff27a] to-[#0dbd2f]"><rect x="13" y="24" width="41" height="38" rx="9" fill="#f0faf0" /><path d="M57 38l14-11c1-1 2 0 2 1v30c0 1-1 2-2 1L57 48z" fill="#e2f5e2" /></Tile>,
  },
  {
    name: 'Berichten',
    art: <Tile bg="bg-linear-to-b from-[#5ff27a] to-[#0dbd2f]"><path d="M43 15c18 0 32 11 32 26S61 67 43 67c-4 0-7 0-10-1-2 2-6 5-11 5 3-3 4-6 3-9-8-5-14-12-14-21 0-15 14-26 32-26z" fill="#ecfaec" /></Tile>,
  },
  {
    name: "Foto's",
    art: (
      <Tile bg="bg-white">
        {petals.map((c, i) => <rect key={c} x="32" y="6" width="22" height="35" rx="11" fill={c} opacity=".82" transform={`rotate(${i * 45} 43 43)`} />)}
      </Tile>
    ),
  },
  {
    name: 'Notities',
    art: <Tile bg="bg-linear-to-b from-white to-[#e9e7e1]"><path d="M0 0h86v22H0z" fill="#fdcb22" /><path d="M0 26h86" stroke="#b5b2a8" strokeWidth="2" strokeDasharray="2 2" /><path d="M0 43h86M0 64h86" stroke="#c9c9c9" strokeWidth="2" /></Tile>,
  },
  {
    name: 'Freeform',
    art: (
      <Tile bg="bg-white">
        <circle cx="35" cy="50" r="25" fill="#ff7a52" />
        <rect x="29" y="11" width="46" height="47" rx="3" fill="#18bdf2" />
        <path d="M29 27a25 25 0 0 1 30 31H29z" fill="#5a9fd8" />
        <path d="M19 55c5-18 13-29 16-23s-6 20-1 20 11-22 16-20-7 18-1 20 9-14 14-15-4 10 2 11c5 0 9-4 12-8" fill="none" stroke="#0d2b4e" strokeWidth="4" strokeLinecap="round" />
      </Tile>
    ),
  },
  {
    name: 'Muziek',
    art: <Tile bg="bg-linear-to-b from-[#fc5a72] to-[#fa2138]"><path d="M33 61V23l27-6v38" fill="none" stroke="#fff" strokeWidth="4" /><path d="M33 20l28-6v11l-28 6z" fill="#fff" /><ellipse cx="26" cy="63" rx="9" ry="7" fill="#fff" /><ellipse cx="54" cy="57" rx="9" ry="7" fill="#fff" /></Tile>,
  },
  {
    name: 'Podcasts',
    art: (
      <Tile bg="bg-linear-to-b from-[#c85cf0] to-[#7326b8]">
        <g fill="none" stroke="#fff" strokeWidth="4" strokeLinecap="round"><path d="M28 64a29 29 0 1 1 30 0" /><path d="M31 53a19 19 0 1 1 24 0" /></g>
        <circle cx="43" cy="38" r="7" fill="#fff" /><path d="M36 53c0-6 14-6 14 0l-3 20c-1 4-7 4-8 0z" fill="#fff" />
      </Tile>
    ),
  },
  {
    name: 'Numbers',
    art: <Tile bg="bg-linear-to-b from-[#7df25f] to-[#1bcd26]"><g fill="#f3f8ee"><rect x="15" y="56" width="11" height="18" rx="2" /><rect x="30" y="40" width="11" height="34" rx="2" /><rect x="45" y="12" width="11" height="62" rx="2" /><rect x="60" y="28" width="11" height="46" rx="2" /></g></Tile>,
  },
  {
    name: 'Keynote',
    art: (
      <Tile bg="bg-linear-to-b from-[#2fc3fb] to-[#1c6cf2]">
        <path d="M22 12h42l5 27H17z" fill="#f5f7fa" /><path d="M24 33h38" stroke="#8c9aa8" strokeWidth="3" />
        <circle cx="43" cy="22" r="8" fill="#3fb6e8" /><path d="M43 22v-8a8 8 0 0 0-8 8z" fill="#f2a63b" /><path d="M43 22l6 6a8 8 0 0 1-12 0z" fill="#5dbb4a" /><path d="M43 22h-8a8 8 0 0 0 2 6z" fill="#e0473e" />
        <path d="M43 39v32M29 73h28" stroke="#dfe6ee" strokeWidth="4" />
      </Tile>
    ),
  },
  {
    name: 'Pages',
    art: <Tile bg="bg-linear-to-b from-[#fdb732] to-[#fb861c]"><path d="M67 17c3-3 6-1 4 3L24 68l-9 5 4-11z" fill="#fff" /><path d="M47 36l5 5" stroke="#6b6157" strokeWidth="2" /><path d="M14 74l2-5 3 3z" fill="#5b4a35" /><path d="M30 73h44" stroke="#ffd596" strokeWidth="4" /></Tile>,
  },
  {
    name: 'App Store',
    art: <Tile bg="bg-linear-to-b from-[#1cb8f8] to-[#1a67ee]"><g stroke="#fff" strokeWidth="8" strokeLinecap="round"><path d="M48 19 26 57M39 19l26 46M16 53h30M60 53h10M22 65l-1 1" /></g></Tile>,
  },
  {
    name: 'Instellingen',
    art: (
      <Tile bg="bg-linear-to-b from-[#dde1e2] to-[#98999a]">
        <circle cx="43" cy="43" r="37" fill="#2c2c2c" />
        <circle cx="43" cy="43" r="32" fill="none" stroke="#b3b3b3" strokeWidth="4" strokeDasharray="2 2" />
        <circle cx="43" cy="43" r="27" fill="#4d4d4d" stroke="#a4a4a4" strokeWidth="3" />
        <circle cx="43" cy="43" r="17" fill="#3a3a3a" stroke="#8c8c8c" strokeWidth="4" />
        <path d="M43 43h28M43 43 29 19M43 43 29 67" stroke="#a9a9a9" strokeWidth="4" />
      </Tile>
    ),
  },
  {
    name: 'QuickTime',
    art: (
      <Tile bg="bg-linear-to-b from-[#505356] to-black">
        <defs>
          <radialGradient id="qt"><stop stopColor="#3ae0ff" /><stop offset=".5" stopColor="#1e8df0" /><stop offset="1" stopColor="#1245a8" /></radialGradient>
          <linearGradient id="qtr" x2="0" y2="1"><stop stopColor="#e6ebfb" /><stop offset="1" stopColor="#9a9da4" /></linearGradient>
        </defs>
        <circle cx="43" cy="42" r="27" fill="url(#qt)" stroke="url(#qtr)" strokeWidth="14" />
        <path d="M40 36c16 3 26 14 29 30h8v12H66C54 74 42 60 40 36z" fill="#a9adb5" />
      </Tile>
    ),
  },
  { name: 'Zoom', art: <Tile bg="bg-[#0b5cff]"><text x="43" y="50" fontSize="24" fontWeight="600" fontFamily="Inter" textAnchor="middle" fill="#fff">zoom</text></Tile> },
];

const openApps: { name: string; art: React.ReactNode }[] = [
  { name: 'Expresso', art: <Tile bg="bg-[#dc3741]"><g fill="#fff"><Ribbon /></g></Tile> },
  { name: 'Acrobat', art: <Tile bg="bg-[#b30b00]"><path d={LOOP_BIG} fill="none" stroke="#fff" strokeWidth="4.500" strokeLinejoin="round" /></Tile> },
  {
    name: 'Acrobat Distiller',
    art: <Tile bg="bg-[#b30b00]"><path d={LOOP_BIG} fill="none" stroke="#fff" strokeWidth="4.500" strokeLinejoin="round" /><path d="M57 13l19 17M76 13 57 30" stroke="#e8e0e0" strokeWidth="5" /></Tile>,
  },
];

function DockItem({ name, children }: Kids & { name: string }) {
  return (
    <button type="button" aria-label={name} className="relative flex h-full w-[114px] items-start justify-center pt-[18px]">
      {children}
      {running.has(name) && <span className="absolute bottom-1 size-2 rounded-full bg-[#1c0507]" />}
    </button>
  );
}

function DockRule({ wide }: { wide?: boolean }) {
  return <div className={wide ? 'flex w-[54px] justify-center pt-4' : 'flex w-[52px] justify-center pt-4'}><span className="h-[100px] w-0.5 bg-[#5e1c2c]/70" /></div>;
}

function Miniature({ outlook }: { outlook?: boolean }) {
  return (
    <svg viewBox="0 0 100 76" className="mt-[17px] h-[76px] w-[100px] overflow-visible" aria-hidden="true">
      {outlook ? (
        <>
          <path d="M0 0h100v52H0z" fill="#fdfdfd" /><path d="M0 0h100v5H0z" fill="#4f8fd6" /><path d="M0 5h14v47H0z" fill="#e3e6ea" />
          <path d="M20 9v40" stroke="#7c86c9" strokeWidth="3" strokeDasharray="2 2" /><path d="M25 9v40" stroke="#b4bac4" strokeWidth="8" strokeDasharray="1 3" /><path d="M34 5v47" stroke="#ddd" />
          <rect x="62" y="25" width="6" height="6" fill="#a9cbe8" />
        </>
      ) : (
        <>
          <path d="M0 2h100v50H0z" fill="#fcfcfc" /><path d="M0 2h100v6H0z" fill="#f0ebe9" /><path d="M0 8h20v44H0z" fill="#ece3df" />
          <path d="M30 9v41" stroke="#9aa4b0" strokeWidth="14" strokeDasharray="1 2" /><path d="M45 8h17v16H45z" fill="#9b9b9b" /><path d="M80 10v22" stroke="#c4c4c4" strokeWidth="8" strokeDasharray="1 3" /><path d="M66 36h14" stroke="#777" strokeWidth="2" />
        </>
      )}
      <svg x="65" y="43" width="33" height="33" viewBox="0 0 86 86">
        <rect width="86" height="86" rx="20" fill={outlook ? '#fff' : '#1f9dfb'} />
        {outlook ? <OutlookArt /> : <><path d="M46 0h20a20 20 0 0 1 20 20v46a20 20 0 0 1-20 20H53c-3-9-5-20-5-36H36c1-20 4-36 10-50z" fill="#e6eaf1" /><path d="M22 25v8M62 25v8M17 57c12 15 39 15 51 0" fill="none" stroke="#15202b" strokeWidth="4" /></>}
      </svg>
    </svg>
  );
}

function Trash() {
  return (
    <svg viewBox="0 0 76 100" className="-mt-2 h-[100px] w-[76px]" aria-hidden="true">
      <path d="M6 18 14 5l10-3 6 4 9-4 8 5 9-5 8 9 8 9-20 10H22z" fill="#f2f2f2" stroke="#9f9f9f" />
      <path d="M20 8l8 10M48 6l-4 14M30 12l8-6 2 12M58 10l-8 12" stroke="#8f8f8f" fill="none" strokeWidth="2" />
      <path d="M26 12l8 3-3 6z" fill="#3bbf9c" /><path d="M50 12l8 2-5 8z" fill="#566f9b" />
      <path d="M1 18c16 12 58 12 74 0l-8 76c-10 7-48 7-58 0z" fill="#dedede" />
      <path d="M12 26l6 68M28 28l3 69M46 28l-2 69M64 26l-6 68" stroke="#efefef" strokeWidth="6" opacity=".8" />
      <path d="M1 18c16 12 58 12 74 0" fill="none" stroke="#f8f8f8" strokeWidth="2" />
    </svg>
  );
}

function Dock() {
  return (
    <footer className="relative mx-auto mt-0.5 mb-[10px] flex h-[136px] w-fit rounded-[36px] border-2 border-white/25 bg-[linear-gradient(90deg,#5f667b_0%,#5f667b_7%,#8a5669_12%,#a05268_17%,#b35674_27%,#b9545d_33%,#c95857_36%,#b55a62_41%,#a8576c_48%,#a8576b_58%,#b5547a_67%,#a3586a_71%,#ab5866_78%,#c85a5a_85%,#dc5b50_92%,#ea5b4b_100%)] bg-origin-border px-[3px] shadow-[0_0_50px_rgb(0_0_0/0.3)]">
      {apps.map((a) => <DockItem key={a.name} name={a.name}>{a.art}</DockItem>)}
      <DockRule />
      {openApps.map((a) => <DockItem key={a.name} name={a.name}>{a.art}</DockItem>)}
      <DockRule wide />
      <DockItem name="Finder-venster"><Miniature /></DockItem>
      <DockItem name="Outlook-venster"><Miniature outlook /></DockItem>
      <DockItem name="Prullenmand"><Trash /></DockItem>
    </footer>
  );
}

export default function App() {
  return (
    <div className="flex min-h-screen flex-col overflow-hidden bg-[linear-gradient(90deg,#07152b_0%,#07152b_17%,#3b0418_18%,#4c0a1c_30%,#5a1012_40%,#4b0a20_44%,#45091e_60%,#5a0a34_68%,#33101f_69%,#4d1016_78%,#7a1608_90%,#98200a_100%)] font-['Lato',sans-serif]">
      <MenuBar />
      <main className="mt-0.5 flex flex-1 flex-col overflow-hidden rounded-[22px] bg-white">
        <TabBar />
        <ToolBar />
        <div className="flex flex-1">
          <SidePanel />
          <div className="flex min-w-0 flex-1 overflow-hidden bg-[#f7f7f7]">
            <Palette />
            <div className="flex flex-1 justify-center"><Page /></div>
          </div>
          <RightRail />
        </div>
      </main>
      <Dock />
    </div>
  );
}
